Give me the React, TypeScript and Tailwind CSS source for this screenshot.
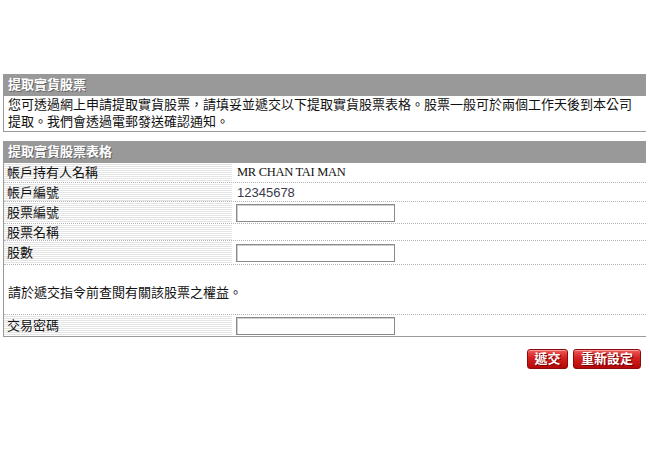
import React from "react";

const stripe =
  "bg-[repeating-linear-gradient(to_bottom,#ffffff_0px,#ffffff_1px,#e4e4e4_1px,#e4e4e4_2px)]";

function Row({
  label,
  h,
  children,
}: {
  label: string;
  h: string;
  children?: React.ReactNode;
}) {
  return (
    <div className={`flex border-b border-dotted border-[#b5b5b5] ${h}`}>
      <div className={`w-[228px] shrink-0 pl-[3px] flex items-center ${stripe}`}>
        {label}
      </div>
      <div className="w-[4px] shrink-0" />
      <div className="flex-1 flex items-center">{children}</div>
    </div>
  );
}

function Input() {
  return (
    <div className="w-[159px] h-[18px] border border-[#8a8a8a] bg-white shadow-[inset_1px_1px_0_#d0d0d0]" />
  );
}

function Btn({ children, w }: { children: React.ReactNode; w: string }) {
  return (
    <button
      className={`${w} h-[20px] rounded-[3px] border border-[#8c0a0a] bg-[linear-gradient(to_bottom,#ee5a5a_0%,#d42020_45%,#b50808_100%)] text-white font-bold text-[13px] leading-[18px] [text-shadow:1px_1px_0_#700] shadow-[inset_0_1px_0_#f79a9a]`}
    >
      {children}
    </button>
  );
}

export default function App() {
  return (
    <div className="w-[650px] h-[462px] bg-white font-['Liberation_Sans','Noto_Sans_CJK_TC',sans-serif] text-[13px] leading-[17px] text-[#111]">
      <div className="pt-[74px] ml-[3px] mr-[4px]">
        {/* Section 1 */}
        <div className="h-[22px] bg-[#999999] pl-[5px] text-white font-bold leading-[22px] [text-shadow:1px_1px_0_#666]">
          提取實貨股票
        </div>
        <div className="border-l border-b border-[#9a9a9a] pl-[4px] pb-[1px] pt-0">
          <div>
            您可透過網上申請提取實貨股票，請填妥並遞交以下提取實貨股票表格。股票一般可於兩個工作天後到本公司
          </div>
          <div>提取。我們會透過電郵發送確認通知。</div>
        </div>

        {/* Section 2 */}
        <div className="mt-[9px] h-[22px] bg-[#999999] pl-[5px] text-white font-bold leading-[22px] [text-shadow:1px_1px_0_#666]">
          提取實貨股票表格
        </div>
        <div className="border-l border-b border-[#9a9a9a]">
          <Row label="帳戶持有人名稱" h="h-[20px]">
            <span className="pl-[1px] font-['Liberation_Serif',serif] tracking-[-0.3px] text-[12.5px]">
              MR CHAN TAI MAN
            </span>
          </Row>
          <Row label="帳戶編號" h="h-[19px]">
            <span className="pl-[1px] text-[#3a3a4a]">12345678</span>
          </Row>
          <Row label="股票編號" h="h-[22px]">
            <Input />
          </Row>
          <Row label="股票名稱" h="h-[17px]" />
          <Row label="股數" h="h-[24px]">
            <Input />
          </Row>
          <div className="h-[50px] pt-[19px] pl-[4px] border-b border-dotted border-[#b5b5b5]">
            請於遞交指令前查閱有關該股票之權益。
          </div>
          <div className="flex h-[21px]">
            <div className={`w-[228px] shrink-0 pl-[3px] flex items-center ${stripe}`}>
              交易密碼
            </div>
            <div className="w-[4px] shrink-0" />
            <div className="flex-1 flex items-center">
              <Input />
            </div>
          </div>
        </div>

        <div className="flex justify-end gap-[5px] mt-[12px] pr-[5px]">
          <Btn w="w-[41px]">遞交</Btn>
          <Btn w="w-[68px]">重新設定</Btn>
        </div>
      </div>
    </div>
  );
}
